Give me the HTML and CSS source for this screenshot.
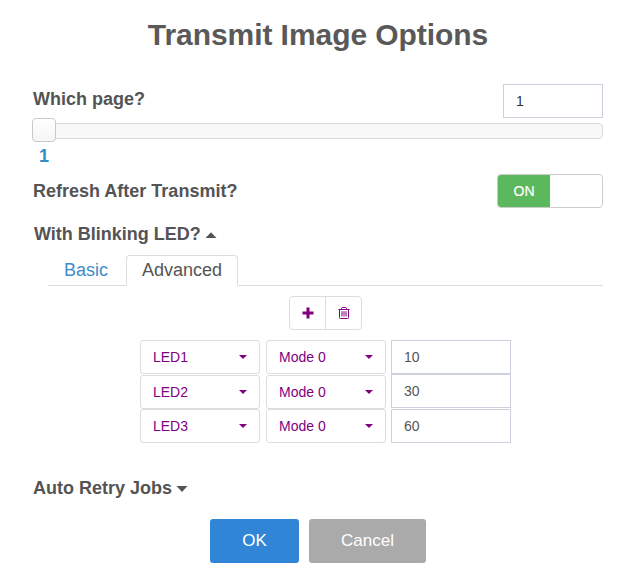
FILE: index.html
```html
<!DOCTYPE html>
<html lang="en">
<head>
<meta charset="utf-8">
<title>Transmit Image Options</title>
<link rel="stylesheet" href="styles.css">
</head>
<body>
<main class="dialog">
  <h1 class="title">Transmit Image Options</h1>
  <div class="row">
    <span class="label">Which page?</span>
    <input class="field page-input" type="text" value="1">
  </div>
  <div class="slider"><div class="handle"></div></div>
  <div class="slider-value">1</div>
  <div class="row refresh">
    <span class="label">Refresh After Transmit?</span>
    <div class="toggle"><span class="toggle-on">ON</span></div>
  </div>
  <div class="label section led-section">With Blinking LED?
    <svg class="caret-big" width="12" height="6" viewBox="0 0 12 6"><path d="M0.500 6L6 0.200l5.500 5.800z"/></svg>
  </div>
  <div class="tabs"><span class="tab">Basic</span><span class="tab active">Advanced</span></div>
  <div class="tools">
    <button class="tool"><svg width="12" height="12" viewBox="0 0 12 12"><path d="M4.500 0.500h3v4h4v3h-4v4h-3v-4h-4v-3h4z" fill="#800080"/></svg></button>
    <button class="tool"><svg width="12" height="12" viewBox="0 0 12 12" fill="none" stroke="#800080"><path d="M0.500 2.500h11M3.500 2.500v-1q0-1 1-1h3q1 0 1 1v1M1.500 2.500v8q0 1 1 1h7q1 0 1-1v-8M4 4.200v5.300M6 4.200v5.300M8 4.200v5.300"/></svg></button>
  </div>
  <div class="leds">
    <div class="led-row">
      <div class="select">LED1<i class="caret"></i></div><div class="select">Mode 0<i class="caret"></i></div><input class="field" type="text" value="10">
    </div>
    <div class="led-row middle">
      <div class="select">LED2<i class="caret"></i></div><div class="select">Mode 0<i class="caret"></i></div><input class="field" type="text" value="30">
    </div>
    <div class="led-row">
      <div class="select">LED3<i class="caret"></i></div><div class="select">Mode 0<i class="caret"></i></div><input class="field" type="text" value="60">
    </div>
  </div>
  <div class="label section retry-section">Auto Retry Jobs
    <svg class="caret-big" width="12" height="6" viewBox="0 0 12 6"><path d="M0.500 0h11L6 6z"/></svg>
  </div>
  <div class="actions"><button class="action ok">OK</button><button class="action cancel">Cancel</button></div>
</main>
</body>
</html>
```
FILE: styles.css
```css
* { box-sizing: border-box; }
body {
  margin: 0;
  background: #fff;
  color: #545454;
  font-family: "Liberation Sans", Arial, sans-serif;
  font-size: 14px;
}
button { font-family: inherit; padding: 0; }
.dialog { height: 581px; padding: 17px 32px 0 33px; overflow: hidden; }
.title { margin: 0 0 31px; font-size: 30px; line-height: 36px; font-weight: 700; letter-spacing: -0.06px; text-align: center; color: #595959; }
.row { display: flex; justify-content: space-between; height: 34px; }
.label { font-size: 18px; line-height: 20px; font-weight: 700; }
.row .label { padding-top: 5px; }
.field {
  width: 120px;
  height: 34px;
  padding: 0 12px;
  border: 1px solid #ccd1dd;
  border-radius: 0;
  background: #fff;
  color: #555;
  font: 14px "Liberation Sans", Arial, sans-serif;
  outline: none;
}
.page-input { width: 100px; color: #333; }
.slider { height: 16px; margin-top: 5px; border: 1px solid #d9d9d9; border-radius: 4px; background: #f8f8f8; }
.handle {
  width: 24px;
  height: 24px;
  margin: -6px 0 0 -2px;
  border: 1px solid #c8c8c8;
  border-radius: 4px;
  background: linear-gradient(#fff, #f6f6f6);
}
.slider-value { width: 22px; margin-top: 7px; height: 28px; line-height: 20px; font-size: 18px; font-weight: 700; text-align: center; color: #2f8fc8; }
.refresh .label { padding-top: 7px; }
.toggle { width: 106px; height: 34px; border: 1px solid #ccc; border-radius: 4px; background: #fff; overflow: hidden; }
.toggle-on { display: block; width: 52px; height: 32px; line-height: 33px; background: #5cb85c; color: #fff; text-align: center; -webkit-text-stroke: 0.2px #fff; }
.section { display: flex; align-items: center; gap: 4px; height: 20px; }
.caret-big { fill: #545454; margin-top: 1px; }
.led-section { margin-top: 16px; padding-left: 1px; }
.tabs { display: flex; height: 31px; margin: 11px 0 0 15px; border-bottom: 1px solid #ddd; }
.tab { height: 31px; padding: 0 15px; border: 1px solid transparent; font-size: 18px; line-height: 28px; color: #428bca; }
.tab.active { margin-left: 2px; border-color: #ddd #ddd #fff; border-radius: 4px 4px 0 0; background: #fff; color: #555; }
.tools { display: flex; width: 73px; height: 34px; margin: 10px 0 0 256px; border: 1px solid #ddd; border-radius: 4px; }
.tool { display: flex; flex: 1; align-items: center; justify-content: center; border: 0; background: none; }
.tool + .tool { border-left: 1px solid #ddd; }
.leds { margin: 10px 0 0 107px; }
.led-row { display: flex; height: 34px; }
.middle { height: 35px; }
.middle .select { margin-top: 1px; }
.select {
  display: flex;
  align-items: center;
  justify-content: space-between;
  width: 120px;
  height: 34px;
  margin-right: 6px;
  padding: 0 12px;
  border: 1px solid #ddd;
  border-radius: 3px;
  color: #800080;
}
.select + .select { margin-right: 5px; }
.caret { border: 4px solid transparent; border-top-color: #800080; border-bottom: 0; }
.retry-section { margin-top: 35px; }
.actions { display: flex; gap: 10px; margin: 21px 0 0 177px; }
.action { height: 44px; border: 0; border-radius: 3px; color: #fff; font-size: 17px; }
.ok { width: 89px; background: #3085d6; }
.cancel { width: 117px; background: #aaa; }
```
